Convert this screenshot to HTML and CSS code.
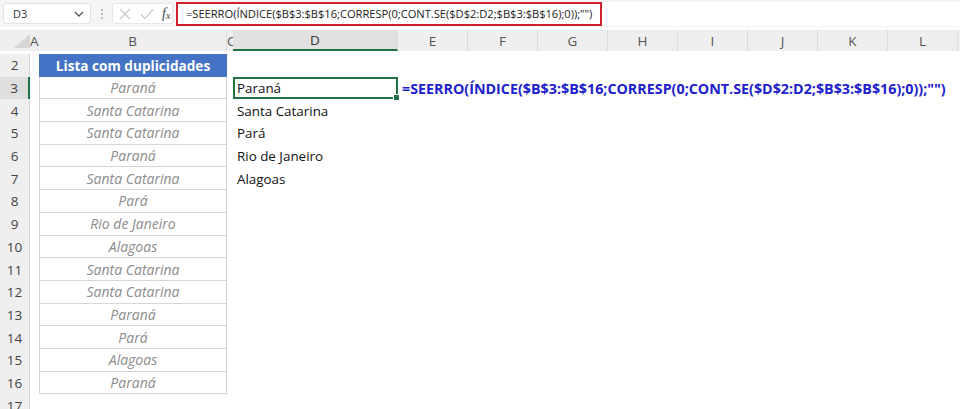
FILE: index.html
```html
<html>
    <head>
        <meta charset="utf-8">
        <link rel="stylesheet" href="styles.css">
    </head>
    <body>
        <div class="formula-bar">
            <div class="name-box">
                <span>D3</span>
                <svg class="chevron" width="10" height="6" viewBox="0 0 10 6"><path d="M1 1 L5 5 L9 1" fill="none" stroke="#555" stroke-width="1.3"/></svg>
            </div>
            <div class="grip"><i></i><i></i><i></i></div>
            <div class="fx-box">
                <svg width="14" height="14" viewBox="0 0 14 14"><path d="M2 2 L12 12 M12 2 L2 12" stroke="#c8c8c8" stroke-width="1.2"/></svg>
                <svg width="14" height="14" viewBox="0 0 14 14"><path d="M1 7.5 L5 11.5 L13 2.5" fill="none" stroke="#c8c8c8" stroke-width="1.2"/></svg>
                <span class="fx">f<sub>x</sub></span>
            </div>
            <div class="formula-input">
                <span class="formula-text">=SEERRO(ÍNDICE($B$3:$B$16;CORRESP(0;CONT.SE($D$2:D2;$B$3:$B$16);0));"")</span>
            </div>
        </div>

        <div class="sheet">
            <div class="corner"><svg width="16" height="14" viewBox="0 0 16 14"><path d="M16 0 L16 14 L0 14 Z" fill="#d6d6d6"/></svg></div>
            <div class="col-head clip-left">A</div>
            <div class="col-head">B</div>
            <div class="col-head clip-left">C</div>
            <div class="col-head selected">D</div>
            <div class="col-head">E</div>
            <div class="col-head">F</div>
            <div class="col-head">G</div>
            <div class="col-head">H</div>
            <div class="col-head">I</div>
            <div class="col-head">J</div>
            <div class="col-head">K</div>
            <div class="col-head">L</div>
        </div>

        <div class="grid" id="grid"></div>

        <script>
            const lista = ["Paraná", "Santa Catarina", "Santa Catarina", "Paraná", "Santa Catarina", "Pará",
                "Rio de Janeiro", "Alagoas", "Santa Catarina", "Santa Catarina", "Paraná", "Pará", "Alagoas", "Paraná"];
            const unicos = ["Paraná", "Santa Catarina", "Pará", "Rio de Janeiro", "Alagoas"];
            const grid = document.getElementById("grid");

            function cell(cls, text) {
                const d = document.createElement("div");
                d.className = cls;
                if (text) d.textContent = text;
                grid.appendChild(d);
                return d;
            }

            for (let r = 2; r <= 17; r++) {
                cell(r === 3 ? "row-head selected" : "row-head", String(r));
                cell("c");
                if (r === 2) cell("c list-title", "Lista com duplicidades");
                else if (r <= 16) cell("c list-item", lista[r - 3]);
                else cell("c");
                cell("c");
                const d = cell(r === 3 ? "c uniq active" : "c uniq", unicos[r - 3] || "");
                if (r === 3) {
                    const h = document.createElement("span");
                    h.className = "handle";
                    d.appendChild(h);
                    cell("c formula-shown", '=SEERRO(ÍNDICE($B$3:$B$16;CORRESP(0;CONT.SE($D$2:D2;$B$3:$B$16);0));"")');
                } else {
                    cell("c rest");
                }
            }
        </script>
    </body>
</html>
```

FILE: styles.css
```css
body {
    margin: 0;
    background: #ffffff;
    font-family: "Open Sans", "Noto Sans", sans-serif;
    width: 960px;
    height: 409px;
    overflow: hidden;
}

/* top bar: name box + formula */
.formula-bar {
    display: flex;
    align-items: center;
    height: 27px;
    padding-left: 3px;
    background: #f5f5f5;
}
.name-box {
    display: flex;
    align-items: center;
    justify-content: space-between;
    box-sizing: border-box;
    width: 88px;
    height: 21px;
    padding: 0 6px 0 9px;
    background: #fff;
    border: 1px solid #e2e2e2;
    border-radius: 3px;
    font-size: 11px;
    color: #333;
}
.grip {
    display: flex;
    flex-direction: column;
    gap: 2px;
    margin: 0 9px 0 10px;
}
.grip i {
    display: block;
    width: 2px;
    height: 2px;
    background: #bbb;
}
.fx-box {
    display: flex;
    align-items: center;
    gap: 8px;
    box-sizing: border-box;
    width: 61px;
    height: 21px;
    padding-left: 5px;
    background: #fff;
    border: 1px solid #e6e6e6;
    border-radius: 3px 0 0 3px;
}
.fx {
    font-family: "Liberation Serif", serif;
    font-style: italic;
    font-size: 14px;
    color: #444;
}
.fx sub {
    font-size: 10px;
    vertical-align: -1px;
}
.formula-input {
    flex: 1;
    display: flex;
    align-items: center;
    height: 24px;
    margin-left: 3px;
    background: #fff;
}
.formula-text {
    box-sizing: border-box;
    display: flex;
    align-items: center;
    height: 24px;
    padding: 0 8px 0 8px;
    border: 2px solid #d0202e;
    font-size: 11.2px;
    letter-spacing: -0.05px;
    color: #222;
}

/* column header strip */
.sheet {
    display: grid;
    grid-template-columns: 30px 9px 188px 6px 165px repeat(8, 70px);
    height: 21px;
    margin-top: 3px;
    background: #efefef;
}
.corner {
    display: flex;
    align-items: flex-end;
    justify-content: flex-end;
    padding: 0 0 3px 0;
}
.col-head {
    display: flex;
    align-items: center;
    justify-content: center;
    font-size: 13.5px;
    color: #555;
    border-right: 1px solid #dcdcdc;
    overflow: hidden;
    position: relative;
}
.col-head.clip-left {
    justify-content: flex-start;
    border-right: none;
}
.col-head.selected {
    background: #e1e1e1;
    border-bottom: 2px solid #217346;
    color: #333;
}

/* cell grid */
.grid {
    display: grid;
    grid-template-columns: 30px 9px 188px 6px 165px 560px;
    grid-auto-rows: 22.7px;
    margin-top: 3px;
}
.row-head {
    display: flex;
    align-items: center;
    justify-content: center;
    background: #efefef;
    font-size: 13.5px;
    color: #444;
    border-right: 1px solid #d4d4d4;
}
.row-head.selected {
    background: #dedede;
    border-right: 2px solid #217346;
}
.c {
    display: flex;
    align-items: center;
    white-space: nowrap;
    position: relative;
}
.list-title {
    justify-content: center;
    background: #4472c4;
    color: #fff;
    font-weight: 700;
    font-size: 13.6px;
}
.list-item {
    justify-content: center;
    box-sizing: border-box;
    border: 1px solid #d6d6d6;
    border-top: none;
    font-style: italic;
    font-size: 14px;
    color: #8c8c8c;
}
.uniq {
    padding-left: 4px;
    font-size: 13.4px;
    color: #111;
}
.uniq.active {
    box-sizing: border-box;
    padding-left: 2px;
    border: 2px solid #217346;
}
.handle {
    position: absolute;
    right: -4px;
    bottom: -4px;
    width: 5px;
    height: 5px;
    background: #217346;
    border: 1px solid #fff;
}
.formula-shown {
    padding-left: 4px;
    font-weight: 700;
    font-size: 14.3px;
    letter-spacing: 0;
    color: #2121cc;
}
```
